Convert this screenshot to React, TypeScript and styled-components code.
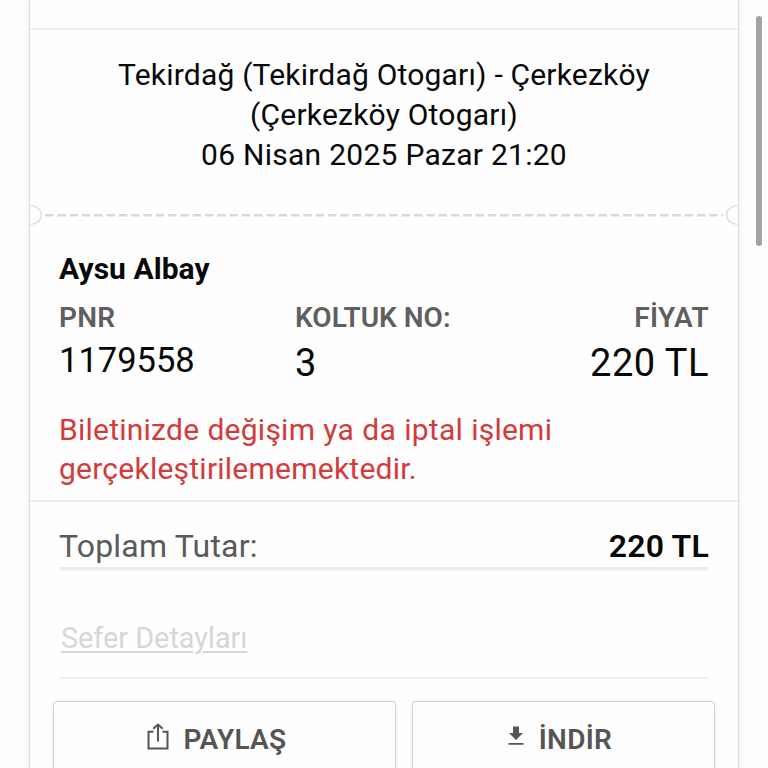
import React from 'react';
import styled, { createGlobalStyle } from 'styled-components';

const App: React.FC = () => {
  return (
    <>
      <GlobalStyle />
      <Page>
        <Card>
          <CardTop />
          <Route>
            <Line $spacing={0.2}>Tekirdağ (Tekirdağ Otogarı) - Çerkezköy</Line>
            <Line $spacing={0.22}>(Çerkezköy Otogarı)</Line>
            <Line $spacing={0.27}>06 Nisan 2025 Pazar 21:20</Line>
          </Route>
          <Perforation>
            <Notch viewBox="0 0 13 22">
              <path d="M0.5 1.5C7 2 11.5 6 11.5 11S7 20 0.5 20.5" />
            </Notch>
            <Dashes>
              <line x1="2" y1="11.3" x2="680" y2="11.3" />
            </Dashes>
            <Notch viewBox="0 0 13 22">
              <path d="M12.5 1.5C6 2 1.5 6 1.5 11S6 20 12.5 20.5" />
            </Notch>
          </Perforation>
          <Passenger>
            <Name>Aysu Albay</Name>
            <Fields>
              <Field>
                <Label $spacing={0.2}>PNR</Label>
                <Pnr>1179558</Pnr>
              </Field>
              <Field>
                <Label>KOLTUK NO:</Label>
                <Value>3</Value>
              </Field>
              <Field $right>
                <Label $spacing={0.4}>FİYAT</Label>
                <Value>220 TL</Value>
              </Field>
            </Fields>
            <Warning>
              Biletinizde değişim ya da iptal işlemi
              <br />
              gerçekleştirilememektedir.
            </Warning>
          </Passenger>
          <Total>
            <span>Toplam Tutar:</span>
            <TotalPrice>220 TL</TotalPrice>
          </Total>
          <Details>
            <DetailsLink>Sefer Detayları</DetailsLink>
          </Details>
          <Actions>
            <Button $inset={16}>
              <ShareIcon viewBox="0 0 22 27">
                <path d="M6.5 8.7H1.5V25.5H20.5V8.7H15.5" />
                <path d="M11 18.5V2M6.2 5.8L11 1.5L15.8 5.8" />
              </ShareIcon>
              PAYLAŞ
            </Button>
            <Button $inset={7}>
              <DownloadIcon viewBox="0 0 16 20">
                <path d="M5 0.5H11V7H15L8 14L1 7H5ZM0.5 17H15.5V18.8H0.5Z" />
              </DownloadIcon>
              İNDİR
            </Button>
          </Actions>
        </Card>
        <ScrollThumb />
      </Page>
    </>
  );
};

export default App;

const GlobalStyle = createGlobalStyle`
  * {
    box-sizing: border-box;
  }

  body {
    margin: 0;
    background: #fefefe;
    color: #080808;
    font-family: Roboto, 'Liberation Sans', sans-serif;
    overflow: hidden;
  }
`;

const Page = styled.div`
  display: flex;
  align-items: flex-start;
  width: 768px;
  height: 768px;
  padding-left: 29px;
  overflow: hidden;
`;

const Card = styled.div`
  width: 710px;
  height: 790px;
  flex: none;
  border: solid #dedede;
  border-width: 0 1.5px;
  box-shadow: 0 0 3px rgba(0, 0, 0, 0.12);
`;

const CardTop = styled.div`
  height: 30px;
  border-bottom: 2px solid #eee;
`;

const Route = styled.div`
  height: 174px;
  padding-top: 25px;
  font-size: 30px;
  line-height: 40px;
  text-align: center;
`;

const Line = styled.div<{ $spacing: number }>`
  letter-spacing: ${({ $spacing }) => $spacing}px;
  white-space: nowrap;
`;

const Perforation = styled.div`
  display: flex;
  height: 22px;
`;

const Notch = styled.svg`
  width: 13px;
  height: 22px;
  flex: none;
  fill: none;
  stroke: #dfdfdf;
  stroke-width: 1.5;
`;

const Dashes = styled.svg`
  flex: 1;
  min-width: 0;
  height: 22px;
  stroke: #d9d9d9;
  stroke-width: 2.4;
  stroke-dasharray: 8.5 3.8;
`;

const Passenger = styled.div`
  height: 276px;
  padding: 25px 29px 0;
  border-bottom: 2px solid #ececec;
`;

const Name = styled.div`
  height: 50px;
  font-size: 30px;
  font-weight: 700;
  line-height: 36px;
  letter-spacing: 0.05px;
`;

const Fields = styled.div`
  display: grid;
  grid-template-columns: 236px 1fr 1fr;
  height: 109px;
`;

const Field = styled.div<{ $right?: boolean }>`
  text-align: ${({ $right }) => ($right ? 'right' : 'left')};
`;

const Label = styled.div<{ $spacing?: number }>`
  height: 36px;
  color: #5f5f5f;
  font-size: 28px;
  font-weight: 600;
  line-height: 34px;
  letter-spacing: ${({ $spacing = 0 }) => $spacing}px;
`;

const Pnr = styled.div`
  font-size: 34.5px;
  line-height: 46px;
`;

const Value = styled.div`
  font-size: 38px;
  line-height: 52px;
  letter-spacing: 0.5px;
`;

const Warning = styled.div`
  color: #d33b3b;
  font-size: 30px;
  line-height: 39.3px;
  letter-spacing: 0.24px;
  word-spacing: 0.5px;
  white-space: nowrap;
`;

const Total = styled.div`
  display: flex;
  justify-content: space-between;
  height: 67px;
  margin: 0 29px;
  padding-top: 23px;
  border-bottom: 2px solid #ececec;
  box-shadow: 0 2px 2px -1px rgba(0, 0, 0, 0.1);
  color: #5a5a5a;
  font-size: 32px;
  line-height: 42px;
  letter-spacing: 0.2px;
`;

const TotalPrice = styled.span`
  color: #080808;
  font-weight: 600;
`;

const Details = styled.div`
  height: 110px;
  margin: 0 29px;
  padding: 51px 2px 0;
  border-bottom: 2px solid #efefef;
`;

const DetailsLink = styled.span`
  color: #d6d6d8;
  font-size: 28.8px;
  line-height: 36px;
  text-decoration: underline;
  text-decoration-thickness: 2px;
  text-underline-offset: 3px;
`;

const Actions = styled.div`
  display: grid;
  grid-template-columns: 343px 303px;
  gap: 16px;
  padding: 22px 0 0 23px;
`;

const Button = styled.div<{ $inset: number }>`
  display: flex;
  align-items: center;
  justify-content: center;
  gap: 15px;
  height: 77px;
  padding-right: ${({ $inset }) => $inset}px;
  border: 1.5px solid #d2d2d2;
  border-radius: 4px;
  box-shadow: 0 0 2px rgba(0, 0, 0, 0.15);
  color: #555;
  font-size: 28px;
  font-weight: 600;
  letter-spacing: 0.3px;
`;

const ShareIcon = styled.svg`
  width: 22px;
  height: 27px;
  margin-bottom: 7px;
  fill: none;
  stroke: #555;
  stroke-width: 2;
`;

const DownloadIcon = styled.svg`
  width: 16px;
  height: 20px;
  margin-bottom: 8px;
  fill: #555;
`;

const ScrollThumb = styled.div`
  width: 6px;
  height: 230px;
  margin: 16px 0 0 17px;
  border-radius: 3px;
  background: #a3a3a3;
`;
